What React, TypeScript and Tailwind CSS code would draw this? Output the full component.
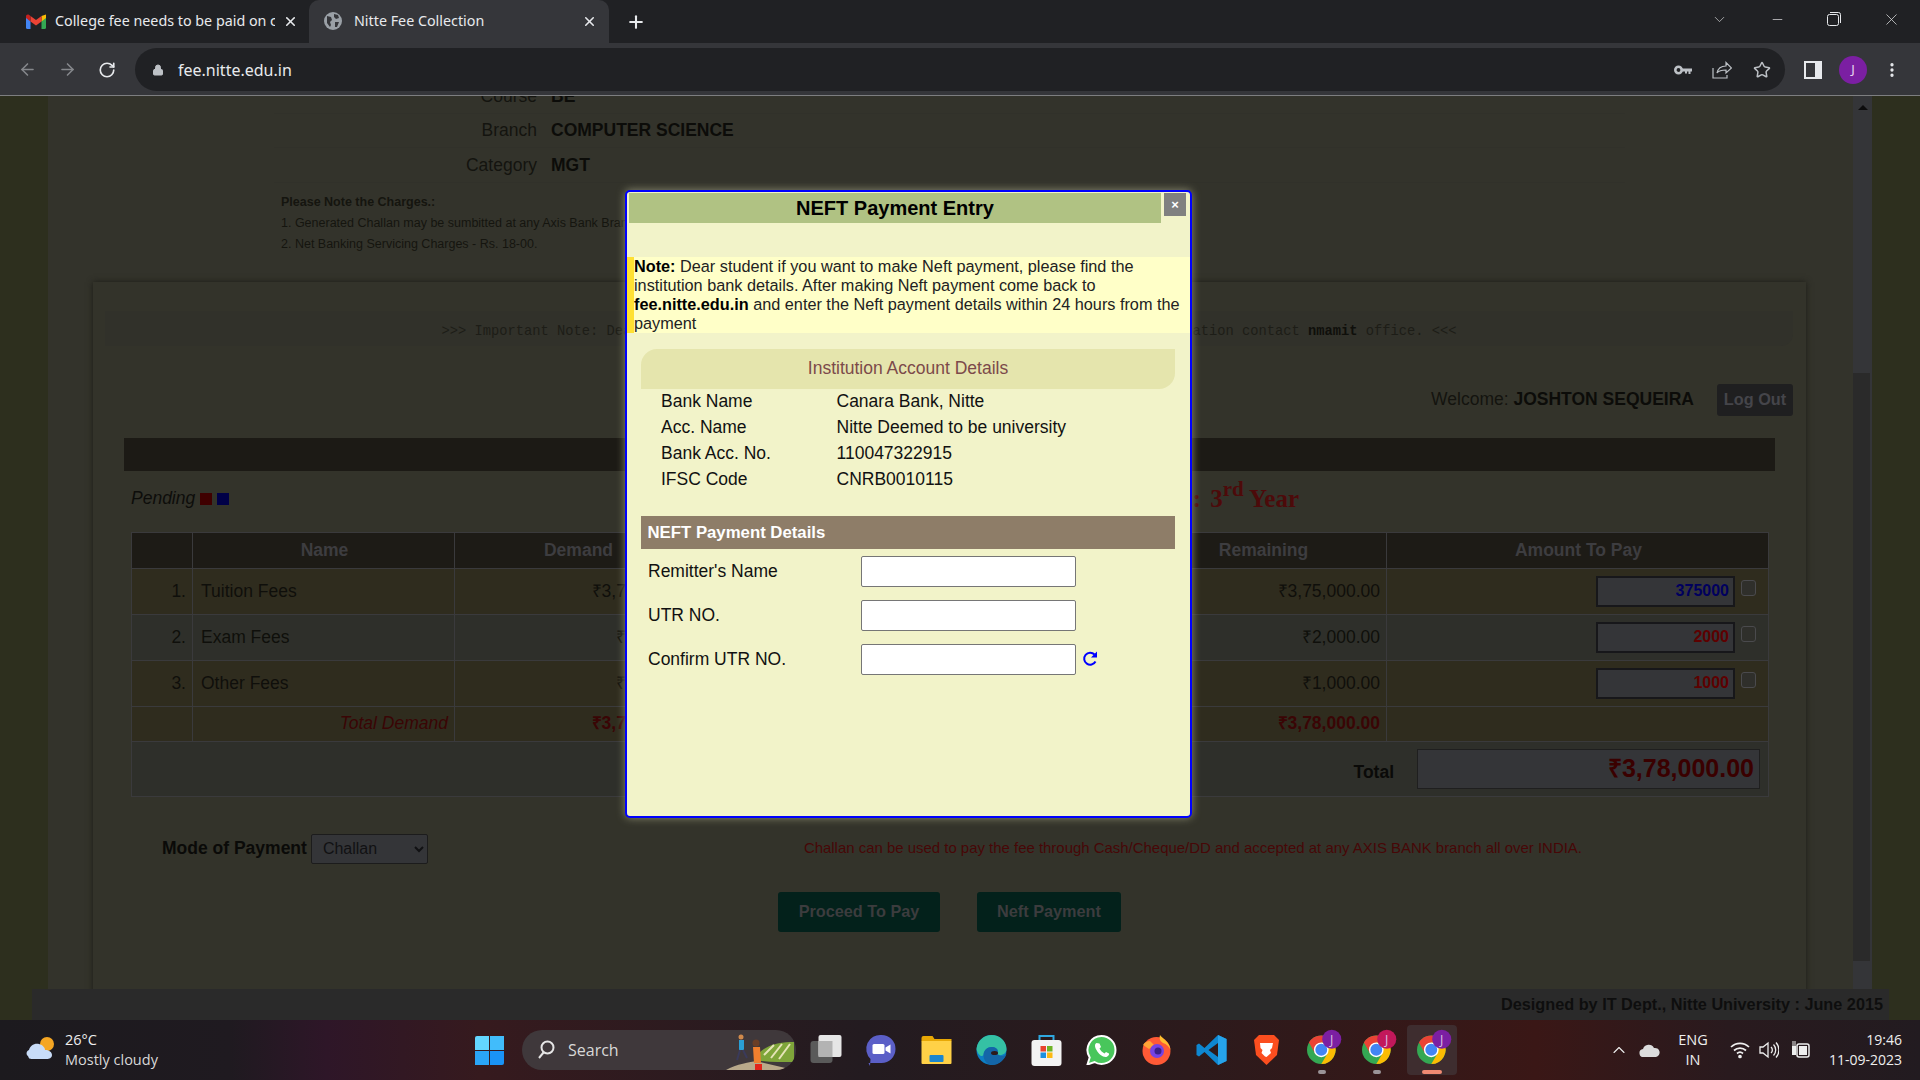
import { ArrowLeft, ArrowRight, RotateCw, Lock, Star, MoreVertical, ChevronDown, ChevronUp, Minus, X, Plus } from "lucide-react";

const rows = [
  { no: "1.", name: "Tuition Fees", demand: "₹3,75,000.00", remaining: "₹3,75,000.00", pay: "375000", tone: "text-[#00005e]", bg: "bg-[#2f2c1e]" },
  { no: "2.", name: "Exam Fees", demand: "₹2,000.00", remaining: "₹2,000.00", pay: "2000", tone: "text-[#5e0000]", bg: "bg-[#2e2f2a]" },
  { no: "3.", name: "Other Fees", demand: "₹1,000.00", remaining: "₹1,000.00", pay: "1000", tone: "text-[#5e0000]", bg: "bg-[#2f2c1e]" },
];

const cell = "border border-[#3a3a3c] pl-[8px] pr-[6px]";

function Gmail() {
  return (
    <svg width="20" height="15" viewBox="0 0 20 15" className="shrink-0">
      <path d="M0 2.5V13.5Q0 15 1.5 15H4.5V6.5Z" fill="#4285f4" />
      <path d="M20 2.5V13.5Q20 15 18.5 15H15.5V6.5Z" fill="#34a853" />
      <path d="M15.5 2 L20 0.5 V4 L15.5 7.5Z" fill="#fbbc04" />
      <path d="M4.5 2V7.5L10 11.5L15.5 7.5V2L10 6Z" fill="#ea4335" />
      <path d="M0 2.5Q0 0 2.5 0.5L4.5 2V7.5L0 4Z" fill="#c5221f" />
    </svg>
  );
}

function Globe() {
  return (
    <svg width="18" height="18" viewBox="0 0 18 18" className="shrink-0">
      <circle cx="9" cy="9" r="9" fill="#9aa0a6" />
      <path d="M3 4l4 1 1 3-2 2 1 3-1 2-3-4zM10 2l4 1 1 3-3 1-2-2zM11 10l4 0-2 5-2 0z" fill="#35363a" />
    </svg>
  );
}

function Tabs() {
  return (
    <div className="flex h-[43px] items-stretch bg-[#202124] text-[14.3px] text-[#e8eaed]">
      <div className="flex w-[309px] items-center pb-[1px] pl-[26px] pr-[11px]">
        <Gmail />
        <span className="ml-[9px] w-[220px] overflow-hidden whitespace-nowrap">College fee needs to be paid on c</span>
        <X size={15} strokeWidth={2.5} className="ml-auto" />
      </div>
      <div className="flex w-[300px] items-center rounded-t-[10px] bg-[#35363a] pb-[1px] pl-[15px] pr-[12px]">
        <Globe />
        <span className="ml-[12px] whitespace-nowrap">Nitte Fee Collection</span>
        <X size={15} strokeWidth={2.5} className="ml-auto" />
      </div>
      <div className="flex w-[54px] items-center justify-center">
        <Plus size={20} strokeWidth={2.5} />
      </div>
      <div className="ml-auto flex items-center pb-[5px] text-[#d5d6d8]">
        <ChevronDown size={17} strokeWidth={1} className="mr-[42px]" />
        <Minus size={15} strokeWidth={1.2} className="mr-[42px]" />
        <svg width="14" height="14" viewBox="0 0 14 14" fill="none" stroke="#e8eaed" className="mr-[41px]">
          <rect x="0.5" y="2.5" width="11" height="11" rx="2" />
          <path d="M3 .5h8.5a2 2 0 0 1 2 2V11" />
        </svg>
        <X size={19} strokeWidth={1} className="mr-[19px]" />
      </div>
    </div>
  );
}

function Toolbar() {
  return (
    <div className="flex h-[53px] items-center border-b border-[#7d7e80] bg-[#35363a] pt-[1px]">
      <div className="flex w-[135px] items-center pl-[18px]">
        <ArrowLeft size={19} className="text-[#85878b]" />
        <ArrowRight size={19} className="ml-[21px] text-[#85878b]" />
        <RotateCw size={18} strokeWidth={2.2} className="ml-[21px] text-[#e8eaed]" />
      </div>
      <div className="flex h-[43px] w-[1650px] items-center rounded-full bg-[#202124] pl-[17px]">
        <Lock size={12} fill="#bdc1c6" className="text-[#bdc1c6]" />
        <span className="ml-[14px] text-[16px] text-[#e8eaed]">fee.nitte.edu.in</span>
        <div className="ml-auto flex items-center pr-[14px]">
          <svg width="18" height="10" viewBox="0 0 18 10" className="mr-[20px]">
            <circle cx="4.5" cy="5" r="3.2" fill="none" stroke="#bdc1c6" strokeWidth="2.6" />
            <path d="M8 3.5H18V6.5H16.5V9H14.5V6.5H13V8.5H11V6.5H8Z" fill="#bdc1c6" />
          </svg>
          <svg width="20" height="19" viewBox="0 0 20 19" fill="none" stroke="#bdc1c6" strokeWidth="1.2" className="mr-[21px]">
            <path d="M1 8v10h14v-3" />
            <path d="M5 13c1-5 4-7 9-7V2.500l5.500 5.500-5.500 5V10c-4 0-7 .5-9 3z" />
          </svg>
          <Star size={18} strokeWidth={2} className="text-[#bdc1c6]" />
        </div>
      </div>
      <div className="ml-[19px] h-[18px] w-[18px] border-[2px] border-[#e8eaed] bg-[#35363a] pl-[9px]">
        <div className="h-full w-full bg-[#e8eaed]" />
      </div>
      <div className="ml-[17px] flex h-[28px] w-[28px] items-center justify-center rounded-full bg-[#7b1fa2] text-[13px] text-[#e8d6ee]">J</div>
      <MoreVertical size={18} strokeWidth={2.4} className="ml-[16px] text-[#e8eaed]" />
    </div>
  );
}

function BackPage() {
  return (
    <div className="w-[1805px] overflow-hidden bg-[#33332b] pl-[45px]">
      <div className="mt-[-17px] ml-[181px] w-[1351px] text-[17.5px] text-[#14140f]">
        {[["Course", "BE"], ["Branch", "COMPUTER SCIENCE"], ["Category", "MGT"]].map(([k, v]) => (
          <div key={k} className="flex h-[34.500px] items-center border-b border-[#31312a]">
            <span className="w-[263px] text-right">{k}</span>
            <b className="ml-[14px] text-[#0c0c09]">{v}</b>
          </div>
        ))}
        <div className="h-[76px] pt-[9px] pl-[7px] text-[12.5px] leading-[21px] text-[#15150f]">
          <b>Please Note the Charges.:</b>
          <div>1. Generated Challan may be sumbitted at any Axis Bank Branch.</div>
          <div>2. Net Banking Servicing Charges - Rs. 18-00.</div>
        </div>
      </div>

      <div className="mt-[23px] h-[740px] w-[1713px] bg-[#33332a] pt-[29px] shadow-[0_0_6px_#1c1c16]">
        <div className="mx-[12px] flex h-[35px] w-[1688px] items-center justify-center rounded-br-[12px] bg-[#31312a] pt-[8px] font-['Liberation_Mono',monospace] text-[13.750px] text-[#1d1d17]">
          <span className="whitespace-pre">{">>> Important Note: Dear students, for any queries on fee payment or for any related information contact "}<b className="text-[#0f0f0b]">nmamit</b>{" office. <<<"}</span>
        </div>

        <div className="mt-[38px] flex h-[32px] items-center justify-end pr-[13px] text-[17.5px] text-[#14140f]">
          <span>Welcome: <b className="text-[#0c0c09]">JOSHTON SEQUEIRA</b></span>
          <button className="ml-[23px] h-[32px] w-[76px] rounded-[3px] bg-[#1f1f20] text-[16.250px] font-bold text-[#45454a]">Log Out</button>
        </div>

        <div className="mx-[31px] mt-[22px] h-[33px] w-[1651px] bg-[#1c1a15]" />

        <div className="flex h-[61px] items-center justify-between pb-[5px] pl-[38px] pr-[507px]">
          <div className="flex items-center text-[17.5px] italic text-[#0d0d0a]">
            Pending
            <span className="ml-[5px] h-[12px] w-[12px] bg-[#3f0000]" />
            <span className="ml-[5px] h-[12px] w-[12px] bg-[#000047]" />
          </div>
          <div className="font-['Liberation_Serif',serif] text-[25px] font-bold text-[#4d0a0a]">
            <span className="mr-[3px]">:</span> 3<sup className="text-[21px]">rd</sup> Year
          </div>
        </div>

        <table className="ml-[38px] w-[1637px] table-fixed border-collapse text-[17.5px] text-[#0f0f0b]">
          <colgroup>
            <col className="w-[61px]" /><col className="w-[262px]" /><col className="w-[246px]" />
            <col className="w-[438px]" /><col className="w-[248px]" /><col className="w-[382px]" />
          </colgroup>
          <thead>
            <tr className="h-[36px] bg-[#1d1b16] text-[17.5px] font-bold text-[#3d3d40]">
              <th className={cell} />
              <th className={cell}>Name</th>
              <th className={cell}>Demand</th>
              <th className={cell}>Paid</th>
              <th className={cell}>Remaining</th>
              <th className={cell}>Amount To Pay</th>
            </tr>
          </thead>
          <tbody>
            {rows.map((r) => (
              <tr key={r.no} className={`h-[46px] ${r.bg}`}>
                <td className={`${cell} text-right`}>{r.no}</td>
                <td className={cell}>{r.name}</td>
                <td className={`${cell} text-right`}>{r.demand}</td>
                <td className={`${cell} text-right`}>₹0.00</td>
                <td className={`${cell} text-right`}>{r.remaining}</td>
                <td className={cell}>
                  <div className="flex items-start justify-end pr-[6px]">
                    <div className={`flex h-[31px] w-[139px] items-center justify-end border-2 border-[#17171a] bg-[#343538] pr-[4px] text-[16px] font-bold ${r.tone}`}>{r.pay}</div>
                    <span className="ml-[6px] mt-[4px] h-[16px] w-[15px] rounded-[3px] border border-[#4a4a4d] bg-[#2f2f2b]" />
                  </div>
                </td>
              </tr>
            ))}
            <tr className="h-[35px] bg-[#2f2c1e] font-bold text-[#3a0505]">
              <td className={cell} />
              <td className={`${cell} text-right font-normal italic`}>Total Demand</td>
              <td className={`${cell} text-right`}>₹3,78,000.00</td>
              <td className={`${cell} text-right`}>₹0.00</td>
              <td className={`${cell} text-right`}>₹3,78,000.00</td>
              <td className={cell} />
            </tr>
            <tr className="h-[55px] bg-[#2e2f2a]">
              <td colSpan={6} className="border border-[#3a3a3c] pr-[8px]">
                <div className="flex items-center justify-end">
                  <b className="mr-[23px] mt-[7px] text-[#0a0a08]">Total</b>
                  <div className="flex h-[40px] w-[343px] items-center justify-end border border-[#1f1f1f] bg-[#343538] pr-[5px] text-[25px] font-bold text-[#3a0000]">₹3,78,000.00</div>
                </div>
              </td>
            </tr>
          </tbody>
        </table>

        <div className="mt-[37px] flex h-[30px] items-center pl-[69px]">
          <b className="text-[17.5px] text-[#0a0a08]">Mode of Payment</b>
          <select className="ml-[4px] h-[30px] w-[117px] rounded-[2px] border border-[#1c1c1c] bg-[#343538] pl-[7px] text-[16px] text-[#111113]">
            <option>Challan</option>
          </select>
          <span className="ml-[376px] whitespace-nowrap text-[14.950px] text-[#470707]">
            Challan can be used to pay the fee through Cash/Cheque/DD and accepted at any AXIS BANK branch all over INDIA.
          </span>
        </div>

        <div className="mt-[28px] flex pl-[685px]">
          <button className="h-[40px] w-[162px] rounded-[3px] bg-[#03211b] text-[16.250px] font-bold text-[#3c3c3e]">Proceed To Pay</button>
          <button className="ml-[37px] h-[40px] w-[144px] rounded-[3px] bg-[#03211b] text-[16.250px] font-bold text-[#3c3c3e]">Neft Payment</button>
        </div>
      </div>
    </div>
  );
}

function Modal() {
  return (
    <div className="absolute left-[625px] top-[94px] h-[628px] w-[567px] rounded-[5px] border-2 border-[#0000ff] bg-[#f2f3c9] text-[17.5px] text-[#111] shadow-[0_0_8px_#8a8a70]">
      <div className="flex items-start pl-[2px] pt-[1px]">
        <div className="flex h-[30px] w-[532px] items-center justify-center bg-[#b0c283] text-[20px] font-bold text-black">NEFT Payment Entry</div>
        <div className="ml-[3px] flex h-[23px] w-[22px] items-center justify-center bg-[#808080] text-[13px] font-bold leading-none text-white">×</div>
      </div>
      <div className="mt-[34px] h-[76px] w-[563px] border-l-[7px] border-[#ffe033] bg-[#ffffc8] text-[16.250px] leading-[19px] text-[#222]">
        <b className="text-black">Note:</b> Dear student if you want to make Neft payment, please find the institution bank details. After making Neft payment come back to <b className="text-black">fee.nitte.edu.in</b> and enter the Neft payment details within 24 hours from the payment
      </div>
      <div className="mx-[14px] mt-[16px] flex h-[40px] w-[534px] items-center justify-center rounded-tl-[16px] rounded-br-[16px] bg-[#e5e5ad] pb-[2px] text-[#7c4a4a]">Institution Account Details</div>
      <div className="ml-[34px] mt-[-1px]">
        {[["Bank Name", "Canara Bank, Nitte"], ["Acc. Name", "Nitte Deemed to be university"], ["Bank Acc. No.", "110047322915"], ["IFSC Code", "CNRB0010115"]].map(([k, v]) => (
          <div key={k} className="flex h-[26px] items-center">
            <span className="w-[175.500px]">{k}</span>
            <span>{v}</span>
          </div>
        ))}
      </div>
      <div className="mx-[14px] mt-[24px] flex h-[33px] w-[534px] items-center bg-[#8e7d68] pl-[6.500px] text-[16.750px] font-bold text-white">NEFT Payment Details</div>
      <div className="ml-[21px] mt-[7px]">
        {["Remitter's Name", "UTR NO.", "Confirm UTR NO."].map((l, i) => (
          <div key={l} className="mb-[13px] flex h-[31px] items-center">
            <span className="w-[213px]">{l}</span>
            <input className="h-[31px] w-[215px] rounded-[2px] border border-[#767676] bg-white" />
            {i === 2 && (
              <svg width="16" height="16" viewBox="0 0 16 16" fill="none" className="ml-[6px] mb-[2px]">
                <path d="M13.500 10.500A6 6 0 1 1 12.500 3.500" stroke="#0000ff" strokeWidth="2" />
                <path d="M15 0.500V6.500H9Z" fill="#0000ff" />
              </svg>
            )}
          </div>
        ))}
      </div>
    </div>
  );
}

function Chrome({ badge }: { badge: string }) {
  return (
    <svg width="42" height="42" viewBox="0 0 42 42" className="mt-[-1px]">
      <circle cx="15" cy="26" r="15" fill="#34a853" />
      <path d="M2 18.500A15 15 0 0 1 28 18.500H15L8.500 30Z" fill="#ea4335" />
      <path d="M28 18.500A15 15 0 0 1 15 41L21.500 30L15 18.500Z" fill="#fbbc04" />
      <circle cx="15" cy="26" r="7" fill="#4285f4" stroke="#fff" strokeWidth="1.500" />
      <circle cx="26" cy="15" r="10" fill={badge} />
      <text x="26" y="20" textAnchor="middle" fontSize="13" fill="#d9bfe0" fontFamily="Open Sans">J</text>
    </svg>
  );
}

function TaskIcons() {
  return (
    <div className="ml-[3px] flex items-center">
      <svg width="32" height="32" viewBox="0 0 32 32" className="w-[55px]">
        <rect x="0" y="7" width="22" height="22" rx="3" fill="#5a5a5a" />
        <rect x="8" y="1" width="23" height="22" rx="2" fill="#e6e6e6" />
        <rect x="8" y="7" width="14" height="16" fill="#b3b3b3" />
      </svg>
      <svg width="30" height="32" viewBox="0 0 30 32" className="w-[55px]">
        <path d="M15 1a14 14 0 0 1 0 28H2l1.500 3L4 25A14 14 0 0 1 15 1Z" fill="#5b5fc7" />
        <rect x="6" y="10" width="12" height="10" rx="1.500" fill="#fff" />
        <path d="M19 13.500L24 10.500V19.500L19 16.500Z" fill="#fff" />
      </svg>
      <svg width="30" height="28" viewBox="0 0 30 28" className="w-[55px]">
        <path d="M0 2a2 2 0 0 1 2-2h9l2 3h17v3H0Z" fill="#e8a805" />
        <rect x="0" y="5" width="30" height="23" rx="1" fill="#ffd147" />
        <rect x="8" y="19" width="14" height="7" rx="1" fill="#1a86d0" />
      </svg>
      <svg width="30" height="30" viewBox="0 0 30 30" className="w-[55px]">
        <circle cx="15" cy="15" r="15" fill="#0c7fc4" />
        <path d="M0 14C1 5 8 0 15 0c8 0 15 6 15 14 0 5-5 7-9 6 2-4-1-8-6-8-4 0-7 3-8 8-2 3-6-1-7-6Z" fill="#35c1a4" />
        <path d="M7 20c0-4 3-8 8-8 4 0 7 2 6 5-1 3 5 6 9 2-2 6-8 11-14 11-5 0-9-4-9-10Z" fill="#1466a8" />
        <ellipse cx="18" cy="18" rx="3.500" ry="2" fill="#2d1a1b" />
      </svg>
      <svg width="30" height="32" viewBox="0 0 30 32" className="w-[55px]">
        <path d="M8 6V2h14v4" fill="none" stroke="#2fa8e0" strokeWidth="2" />
        <rect x="0" y="6" width="30" height="26" rx="3" fill="#f3f3f3" />
        <rect x="9" y="12" width="5.500" height="5.500" fill="#e8432e" />
        <rect x="15.500" y="12" width="5.500" height="5.500" fill="#6fb327" />
        <rect x="9" y="18.500" width="5.500" height="5.500" fill="#1e90e0" />
        <rect x="15.500" y="18.500" width="5.500" height="5.500" fill="#fdb913" />
      </svg>
      <svg width="30" height="30" viewBox="0 0 30 30" className="w-[55px]">
        <path d="M15 1a14 14 0 0 1 0 28c-2.500 0-5-.7-7-2l-7 2.500 2.200-7A14 14 0 0 1 15 1Z" fill="#48c65b" stroke="#fff" strokeWidth="2" />
        <path d="M10 8c-2 1-2 4 0 7 2 4 6 7 9 7 2 0 4-2 3.500-3.500l-3-1.500-1.500 1.500c-2-1-4-3-5-5l1.500-1.500-1.500-3.500Z" fill="#fff" />
      </svg>
      <svg width="29" height="30" viewBox="0 0 29 30" className="w-[55px]">
        <circle cx="14.500" cy="16" r="14" fill="#ff5a36" />
        <path d="M18 0c2 3 10 7 10.500 15-1-3-4-6-7.500-7-3-2-4-4-3-8Z" fill="#ffbd2e" />
        <path d="M1 10c2-3 4-4 7-4l4 4-5 4Z" fill="#ffa436" />
        <circle cx="15" cy="16" r="7" fill="#7542e5" />
        <circle cx="16" cy="16" r="3.500" fill="#3a1f8a" />
      </svg>
      <svg width="30" height="30" viewBox="0 0 30 30" className="w-[55px]">
        <path d="M21.500 0L30 4V26L21.500 30L8 17L2.500 21.500L0 20V10L2.500 8.500L8 13Z" fill="#0e87d1" />
        <path d="M21.500 0L30 4V26L21.500 30V0Z" fill="#26a3ea" />
        <path d="M21.500 8L12 15L21.500 22Z" fill="#2d1a1b" />
      </svg>
      <svg width="25" height="30" viewBox="0 0 25 30" className="w-[55px]">
        <path d="M5 0H20L25 5L23 20L12.500 30L2 20L0 5Z" fill="#fb4e1f" />
        <path d="M6 8h13l-1 5-2 2 1 3-4.500 4-1.500-.5L7.500 18l1-3-2-2Z" fill="#fff" />
      </svg>
    </div>
  );
}

function Taskbar() {
  return (
    <div className="flex h-[60px] items-center bg-[linear-gradient(90deg,#1c1a1e_0%,#1f1a20_12%,#2e1628_17%,#361a1e_25%,#231b20_45%,#2c1a1c_62%,#3a1716_80%,#291a1e_90%,#221b20_100%)] font-['Open_Sans',sans-serif] text-[#eee]">
      <svg width="32" height="28" viewBox="0 0 32 28" className="ml-[25px] shrink-0">
        <circle cx="22" cy="8" r="7" fill="#f5a623" />
        <path d="M3 20c-2-1-2-5 1-6 1-4 5-7 10-6 4 1 6 4 6 6 4 0 7 2 7 5 0 3-3 4-5 4H8c-3 0-4 0-5-3Z" fill="#c8dcf8" />
      </svg>
      <div className="ml-[8px] w-[110px] whitespace-nowrap text-[14.500px] leading-[20px]">
        <div>26°C</div>
        <div className="text-[#d8d8d8]">Mostly cloudy</div>
      </div>
      <div className="ml-[300px] grid h-[29px] w-[29px] shrink-0 grid-cols-2 gap-[1px]">
        <div className="rounded-tl-[2px] bg-[#63d6ff]" />
        <div className="bg-[#41bcfb]" />
        <div className="bg-[#2aa5f7]" />
        <div className="rounded-br-[2px] bg-[#1a93f5]" />
      </div>
      <div className="relative ml-[18px] flex h-[40px] w-[274px] shrink-0 items-center overflow-hidden rounded-full bg-[#3f383b] pl-[15px] text-[16px] text-[#d8d8d8]">
        <svg width="18" height="20" viewBox="0 0 18 20" fill="none" stroke="#e5e5e5" strokeWidth="2">
          <circle cx="10.500" cy="7.500" r="6" />
          <path d="M6.500 12.500L2 18" />
        </svg>
        <span className="ml-[13px]">Search</span>
        <svg width="68" height="36" viewBox="0 0 68 36" className="absolute bottom-0 right-[2px]">
          <path d="M0 36C10 30 25 28 30 27L68 36Z" fill="#b9a98a" />
          <path d="M30 22C40 10 55 8 68 8V28C55 28 40 28 30 26Z" fill="#7fa53a" />
          <path d="M38 21L48 11M45 24L56 10M53 25L64 10" stroke="#e6e4b8" strokeWidth="2" />
          <rect x="13" y="6" width="5" height="10" fill="#2a9fd6" />
          <circle cx="15" cy="3" r="2.500" fill="#d08a4c" />
          <path d="M14 16L11 26M17 16L21 24" stroke="#3a3a5a" strokeWidth="2" />
          <circle cx="30" cy="9" r="3.500" fill="#6b3e26" />
          <path d="M27 13H34L35 29H28Z" fill="#f07f2e" />
          <rect x="29" y="30" width="7" height="6" fill="#e2231a" />
        </svg>
      </div>
      <TaskIcons />
      <div className="ml-[3px] flex gap-[5px]">
        {["#7b1fa2", "#c2185b", "#7b1fa2"].map((c, i) => (
          <div key={i} className={`relative flex h-[50px] w-[50px] justify-start rounded-[4px] pl-[10px] ${i === 2 ? "bg-[#3e2d2f]" : ""}`}>
            <Chrome badge={c} />
            <span className={`absolute bottom-[1px] left-1/2 h-[4px] -translate-x-1/2 rounded-full ${i === 2 ? "w-[20px] bg-[#f08a72]" : "w-[8px] bg-[#9a9498]"}`} />
          </div>
        ))}
      </div>
      <ChevronUp size={20} strokeWidth={1.300} className="ml-[152px] text-[#eee]" />
      <svg width="22" height="14" viewBox="0 0 22 14" className="ml-[10px]">
        <path d="M5 14a4 4 0 0 1-1-8 6 6 0 0 1 11-1 4.500 4.500 0 0 1 2 9Z" fill="#dcdcdc" />
      </svg>
      <div className="ml-[12px] w-[40px] text-center text-[14.500px] leading-[20px]">
        <div>ENG</div>
        <div>IN</div>
      </div>
      <svg width="20" height="18" viewBox="0 0 20 18" fill="none" stroke="#eee" strokeWidth="1.700" className="ml-[17px]">
        <path d="M1 6a13 13 0 0 1 18 0M4 9.500a9 9 0 0 1 12 0M7 12.500a4.500 4.500 0 0 1 6 0" />
        <circle cx="10" cy="15.500" r="1" fill="#eee" />
      </svg>
      <svg width="20" height="20" viewBox="0 0 20 20" fill="none" stroke="#eee" strokeWidth="1.300" className="ml-[9px]">
        <path d="M1 7v6h3l5 4V3L4 7Z" />
        <path d="M12 7a4 4 0 0 1 0 6M14.500 4.500a8 8 0 0 1 0 11M17 2.500a11 11 0 0 1 0 15" />
      </svg>
      <svg width="20" height="20" viewBox="0 0 20 20" className="ml-[12px]">
        <rect x="1" y="6" width="4" height="9" fill="#eee" />
        <path d="M2 1v5M4 1v5" stroke="#eee" />
        <rect x="6" y="4" width="12" height="13" rx="2" fill="none" stroke="#eee" strokeWidth="1.500" />
        <rect x="8" y="6" width="8" height="9" fill="#eee" />
      </svg>
      <div className="ml-auto whitespace-nowrap pr-[18px] text-right text-[14px] leading-[20px]">
        <div>19:46</div>
        <div>11-09-2023</div>
      </div>
    </div>
  );
}

export default function App() {
  return (
    <div className="flex h-[1080px] w-[1920px] flex-col overflow-hidden font-['Noto_Sans',sans-serif]">
      <Tabs />
      <Toolbar />
      <div className="relative flex h-[924px] overflow-hidden bg-[#2d2f1e] font-['Liberation_Sans',Arial,sans-serif]">
        <div className="flex w-[1872px] shrink-0 pl-[48px]">
          <BackPage />
          <div className="w-[19px] shrink-0 bg-[#343538]">
            <div className="flex h-[277px] justify-center pt-[9px]">
              <div className="h-0 w-0 border-x-[5px] border-b-[5px] border-x-transparent border-b-[#0c0c0c]" />
            </div>
            <div className="h-[588px] w-[17px] bg-[#2a2a2a]" />
          </div>
        </div>
        <div className="absolute bottom-0 left-[32px] right-[31px] flex h-[31px] items-center justify-end bg-[#2a2a2a] pr-[6px] text-[16.250px] font-bold text-[#0e0e0e]">
          Designed by IT Dept., Nitte University : June 2015
        </div>
        <Modal />
      </div>
      <Taskbar />
    </div>
  );
}
